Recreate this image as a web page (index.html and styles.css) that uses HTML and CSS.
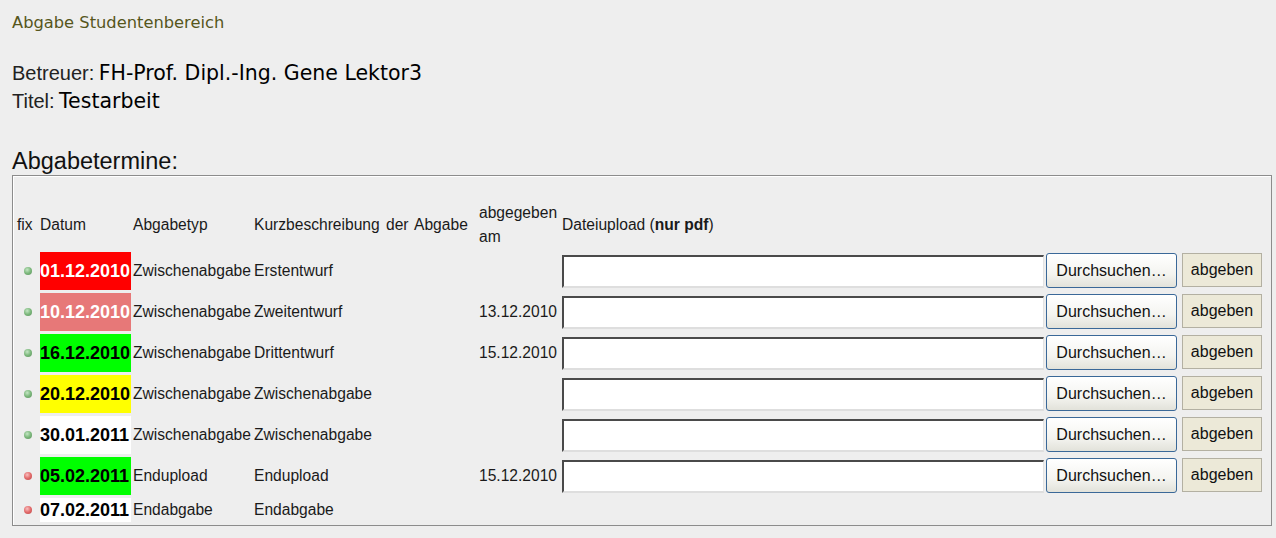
FILE: index.html
```html
<!DOCTYPE html>
<html lang="de">
<head>
<meta charset="utf-8">
<title>Abgabe Studentenbereich</title>
<link rel="stylesheet" href="styles.css">
</head>
<body>
<div class="page">
  <div class="title">Abgabe Studentenbereich</div>
  <div class="info">
    <div class="info-line"><span class="lbl">Betreuer:</span> <span class="val">FH-Prof. Dipl.-Ing. Gene Lektor3</span></div>
    <div class="info-line"><span class="lbl">Titel:</span> <span class="val">Testarbeit</span></div>
  </div>
  <div class="section">Abgabetermine:</div>
  <div class="box">
    <table class="grid">
      <colgroup>
        <col class="w-fix">
        <col class="w-date">
        <col class="w-typ">
        <col class="w-desc">
        <col class="w-am">
        <col class="w-in">
        <col class="w-br">
        <col class="w-sub">
      </colgroup>
      <thead>
        <tr class="head">
          <th class="h-fix">fix</th>
          <th>Datum</th>
          <th>Abgabetyp</th>
          <th class="h-desc">Kurzbeschreibung der Abgabe</th>
          <th><span class="two">abgegeben<br>am</span></th>
          <th colspan="3">Dateiupload (<b>nur pdf</b>)</th>
        </tr>
      </thead>
      <tbody>
        <tr class="row">
          <td><span class="dot green"></span></td>
          <td class="date red">01.12.2010</td>
          <td>Zwischenabgabe</td>
          <td>Erstentwurf</td>
          <td></td>
          <td><span class="file"></span></td>
          <td class="btn-cell"><span class="browse">Durchsuchen…</span></td>
          <td class="btn-cell"><span class="submit">abgeben</span></td>
        </tr>
        <tr class="row">
          <td><span class="dot green"></span></td>
          <td class="date salmon">10.12.2010</td>
          <td>Zwischenabgabe</td>
          <td>Zweitentwurf</td>
          <td>13.12.2010</td>
          <td><span class="file"></span></td>
          <td class="btn-cell"><span class="browse">Durchsuchen…</span></td>
          <td class="btn-cell"><span class="submit">abgeben</span></td>
        </tr>
        <tr class="row">
          <td><span class="dot green"></span></td>
          <td class="date lime">16.12.2010</td>
          <td>Zwischenabgabe</td>
          <td>Drittentwurf</td>
          <td>15.12.2010</td>
          <td><span class="file"></span></td>
          <td class="btn-cell"><span class="browse">Durchsuchen…</span></td>
          <td class="btn-cell"><span class="submit">abgeben</span></td>
        </tr>
        <tr class="row">
          <td><span class="dot green"></span></td>
          <td class="date yellow">20.12.2010</td>
          <td>Zwischenabgabe</td>
          <td>Zwischenabgabe</td>
          <td></td>
          <td><span class="file"></span></td>
          <td class="btn-cell"><span class="browse">Durchsuchen…</span></td>
          <td class="btn-cell"><span class="submit">abgeben</span></td>
        </tr>
        <tr class="row">
          <td><span class="dot green"></span></td>
          <td class="date white">30.01.2011</td>
          <td>Zwischenabgabe</td>
          <td>Zwischenabgabe</td>
          <td></td>
          <td><span class="file"></span></td>
          <td class="btn-cell"><span class="browse">Durchsuchen…</span></td>
          <td class="btn-cell"><span class="submit">abgeben</span></td>
        </tr>
        <tr class="row">
          <td><span class="dot redd"></span></td>
          <td class="date lime">05.02.2011</td>
          <td>Endupload</td>
          <td>Endupload</td>
          <td>15.12.2010</td>
          <td><span class="file"></span></td>
          <td class="btn-cell"><span class="browse">Durchsuchen…</span></td>
          <td class="btn-cell"><span class="submit">abgeben</span></td>
        </tr>
        <tr class="row last">
          <td><span class="dot redd"></span></td>
          <td class="date white">07.02.2011</td>
          <td>Endabgabe</td>
          <td>Endabgabe</td>
          <td></td>
          <td></td>
          <td></td>
          <td></td>
        </tr>
      </tbody>
    </table>
  </div>
</div>
</body>
</html>
```

FILE: styles.css
```css
html, body {
  margin: 0;
  padding: 0;
  background: #eeeeee;
}
body {
  font-family: "Liberation Sans", Arial, sans-serif;
  color: #111;
}
.page {
  padding-left: 12px;
}
.title {
  margin-top: 13px;
  height: 20px;
  line-height: 20px;
  font-family: "DejaVu Sans", sans-serif;
  font-size: 16.3px;
  color: #56561c;
}
.info {
  margin-top: 26px;
}
.info-line {
  height: 28px;
  line-height: 28px;
  white-space: nowrap;
}
.lbl {
  font-family: "Liberation Sans", Arial, sans-serif;
  font-size: 20px;
  color: #222;
}
.val {
  font-family: "DejaVu Sans", sans-serif;
  font-size: 20.5px;
  color: #000;
}
.section {
  margin-top: 32px;
  height: 28px;
  line-height: 28px;
  font-size: 23.5px;
  color: #111;
}
.box {
  width: 1260px;
  height: 351px;
  box-sizing: border-box;
  border: 1px solid #8c8c8c;
  box-shadow: inset 1px 1px 0 #ffffff;
  padding-top: 22px;
}
.grid {
  width: 1251px;
  table-layout: fixed;
  border-collapse: separate;
  border-spacing: 2px 3px;
  font-size: 15.6px;
  color: #1a1a1a;
}
.w-fix { width: 23px; }
.w-date { width: 91px; }
.w-typ { width: 119px; }
.w-desc { width: 223px; }
.w-am { width: 81px; }
.w-in { width: 482px; }
.w-br { width: 134px; }
.w-sub { width: 80px; }

.grid th {
  font-weight: normal;
  text-align: left;
  padding: 0;
  vertical-align: middle;
  white-space: nowrap;
  overflow: visible;
}
.grid td {
  padding: 0;
  vertical-align: middle;
  white-space: nowrap;
  overflow: visible;
}
.grid th.h-fix {
  padding-left: 2px;
}
.h-desc {
  word-spacing: 2px;
}
.head {
  height: 48px;
}
.two {
  display: inline-block;
  line-height: 24px;
}
.row {
  height: 38px;
}
.row.last {
  height: 24px;
}
.dot {
  display: block;
  width: 8px;
  height: 8px;
  margin-left: 9px;
  border-radius: 50%;
}
.dot.green {
  background: radial-gradient(circle at 40% 35%, #c4e6c4 0, #7cb87c 50%, #5a8f5a 100%);
}
.dot.redd {
  background: radial-gradient(circle at 40% 35%, #f8c0c0 0, #e26a6a 50%, #b84848 100%);
}
.grid td.date {
  font-weight: bold;
  font-size: 18px;
  color: #000;
}
.grid td.red { background: #ff0000; color: #ffffff; }
.grid td.salmon { background: #e77878; color: #ffffff; }
.grid td.lime { background: #00ff00; }
.grid td.yellow { background: #ffff00; }
.grid td.white { background: #ffffff; }

.file {
  display: block;
  width: 482px;
  height: 33px;
  box-sizing: border-box;
  background: #ffffff;
  border-top: 2px solid #4a4a4a;
  border-left: 2px solid #4a4a4a;
  border-bottom: 2px solid #dedede;
  border-right: 1px solid #e4e4e4;
}
.grid td.btn-cell {
  vertical-align: top;
  padding-top: 1px;
}
.browse {
  display: flex;
  align-items: center;
  justify-content: center;
  width: 131px;
  height: 35px;
  box-sizing: border-box;
  border: 1px solid #3a6898;
  border-radius: 3px;
  background: linear-gradient(#ffffff, #f4f4f0 60%, #e2e2da);
  color: #111;
  font-size: 16px;
}
.submit {
  display: flex;
  align-items: center;
  justify-content: center;
  width: 80px;
  height: 34px;
  box-sizing: border-box;
  border: 1px solid #b3b0a2;
  background: #ece9d8;
  color: #111;
  font-size: 16px;
}
```
